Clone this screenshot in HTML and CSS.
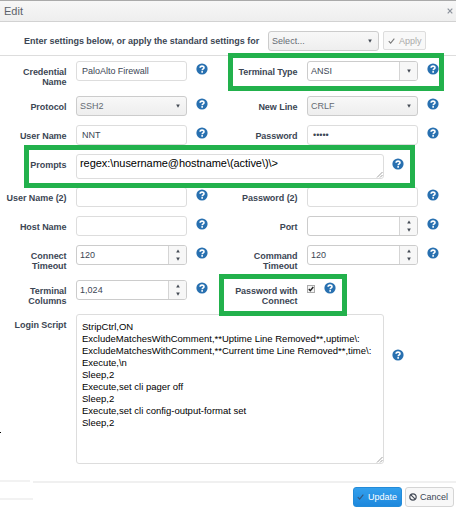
FILE: index.html
```html
<!DOCTYPE html>
<html lang="en">
<head>
<meta charset="utf-8">
<title>Edit</title>
<link rel="stylesheet" href="styles.css">
</head>
<body>
<svg width="0" height="0" class="defs">
  <symbol id="help" viewBox="0 0 12 12"><circle cx="6" cy="6" r="5.6" fill="#2870b0"/><path d="M4.1 4.8C4.1 2.6 8 2.6 8 4.7C8 6 6.2 5.9 6.2 7.3" fill="none" stroke="#fff" stroke-width="1.6"/><rect x="5.3" y="8.1" width="1.7" height="1.6" fill="#fff"/></symbol>
  <symbol id="grip" viewBox="0 0 7 7"><path d="M1 6.5L6.5 1M4 6.5L6.5 4" stroke="#888" stroke-width=".8"/></symbol>
  <symbol id="down" viewBox="0 0 5 5"><path d="M.2 .5H4.8L2.5 4.7Z" fill="#454b55"/></symbol>
  <symbol id="up" viewBox="0 0 5 5"><path d="M.2 4.5H4.8L2.5 .5Z" fill="#454b55"/></symbol>
</svg>
<div class="dialog">
  <header class="titlebar"><span class="title">Edit</span><svg class="close" viewBox="0 0 6 6"><path d="M.7 .7L5.3 5.3M5.3 .7L.7 5.3" stroke="#8b919b" stroke-width="1.2"/></svg></header>
  <div class="toolbar">
    <span class="intro">Enter settings below, or apply the standard settings for</span>
    <div class="field select preset"><span>Select...</span><svg class="arrow"><use href="#down"/></svg></div>
    <div class="apply"><svg class="tick" viewBox="0 0 8 7"><path d="M.8 3.7L3 6L7.3 .8" fill="none" stroke="#777" stroke-width="1.2"/></svg><span>Apply</span></div>
  </div>
  <main class="form">
    <label>Credential<br>Name</label><div class="field input"><span>PaloAlto Firewall</span></div><svg class="help"><use href="#help"/></svg>
    <label>Terminal Type</label><div class="field combo"><span>ANSI</span><i class="btn"><svg class="arrow"><use href="#down"/></svg></i></div><svg class="help"><use href="#help"/></svg>

    <label>Protocol</label><div class="field select"><span>SSH2</span><svg class="arrow"><use href="#down"/></svg></div><svg class="help"><use href="#help"/></svg>
    <label>New Line</label><div class="field select"><span>CRLF</span><svg class="arrow"><use href="#down"/></svg></div><svg class="help"><use href="#help"/></svg>

    <label>User Name</label><div class="field input"><span>NNT</span></div><svg class="help"><use href="#help"/></svg>
    <label>Password</label><div class="field input"><span class="dots">•••••</span></div><svg class="help"><use href="#help"/></svg>

    <label>Prompts</label>
    <div class="wide"><div class="field area prompts"><span>regex:\nusername@hostname\(active\)\&gt;</span><svg class="grip"><use href="#grip"/></svg></div><svg class="help"><use href="#help"/></svg></div>

    <label>User Name (2)</label><div class="field input"></div><svg class="help"><use href="#help"/></svg>
    <label>Password (2)</label><div class="field input"></div><svg class="help"><use href="#help"/></svg>

    <label>Host Name</label><div class="field input"></div><svg class="help"><use href="#help"/></svg>
    <label>Port</label><div class="field combo"><span></span><i class="btn"><svg class="arrow"><use href="#up"/></svg><svg class="arrow"><use href="#down"/></svg></i></div><svg class="help"><use href="#help"/></svg>

    <label>Connect<br>Timeout</label><div class="field combo"><span>120</span><i class="btn"><svg class="arrow"><use href="#up"/></svg><svg class="arrow"><use href="#down"/></svg></i></div><svg class="help"><use href="#help"/></svg>
    <label>Command<br>Timeout</label><div class="field combo"><span>120</span><i class="btn"><svg class="arrow"><use href="#up"/></svg><svg class="arrow"><use href="#down"/></svg></i></div><svg class="help"><use href="#help"/></svg>

    <label>Terminal<br>Columns</label><div class="field combo"><span>1,024</span><i class="btn"><svg class="arrow"><use href="#up"/></svg><svg class="arrow"><use href="#down"/></svg></i></div><svg class="help"><use href="#help"/></svg>
    <label>Password with<br>Connect</label>
    <div class="check"><svg class="box" viewBox="0 0 8 8"><rect x=".5" y=".5" width="7" height="7" fill="#f4f4f4" stroke="#aaa"/><path d="M1.8 4L3.3 5.7L6.3 2" fill="none" stroke="#222" stroke-width="1.4"/></svg><svg class="help"><use href="#help"/></svg></div>

    <label>Login Script</label>
    <div class="wide login"><div class="field area script"><pre>StripCtrl,ON
ExcludeMatchesWithComment,**Uptime Line Removed**,uptime\:
ExcludeMatchesWithComment,**Current time Line Removed**,time\:
Execute,\n
Sleep,2
Execute,set cli pager off
Sleep,2
Execute,set cli config-output-format set
Sleep,2</pre><svg class="grip"><use href="#grip"/></svg></div><svg class="help"><use href="#help"/></svg></div>
  </main>
  <footer class="footer">
    <div class="action primary"><svg class="tick" viewBox="0 0 8 7"><path d="M.8 3.7L3 6L7.3 .8" fill="none" stroke="#35577c" stroke-width="1.3"/></svg><span>Update</span></div>
    <div class="action"><svg class="ban" viewBox="0 0 8 8"><circle cx="4" cy="4" r="3.2" fill="none" stroke="#444b57" stroke-width="1.2"/><path d="M1.8 1.8L6.2 6.2" stroke="#444b57" stroke-width="1.2"/></svg><span>Cancel</span></div>
  </footer>
  <div class="mark mark-type"></div>
  <div class="mark mark-prompts"></div>
  <div class="mark mark-password"></div>
  <i class="line line-a"></i><i class="line line-b"></i><i class="speck"></i>
</div>
</body>
</html>
```
FILE: styles.css
```css
* { box-sizing: border-box; }
body { margin: 0; background: #fff; font: 9px "Liberation Sans", Arial, sans-serif; color: #3c4654; }
.defs { position: absolute; }
svg { display: block; flex: none; }
.dialog { position: relative; width: 456px; height: 508px; display: flex; flex-direction: column; overflow: hidden; }
.titlebar { height: 22px; flex: none; display: flex; align-items: center; justify-content: space-between; padding: 0 3px 0 4px; background: linear-gradient(#f7f7f7, #eee); border-top: 1px solid #aaa; border-bottom: 1px solid #d2d2d2; }
.title { font-size: 11px; color: #5c626b; }
.close { width: 6px; height: 6px; }
.toolbar { height: 34px; flex: none; display: flex; align-items: flex-start; padding: 9px 0 0 24px; border-bottom: 1px solid #ddd; }
.intro { width: 244px; padding-top: 5px; line-height: 10px; font-weight: bold; letter-spacing: -.01px; white-space: nowrap; }
.apply { display: flex; align-items: center; gap: 4px; width: 43px; height: 19px; margin-left: 4px; padding-left: 4px; border: 1px solid #ddd; border-radius: 2px; background: #f8f8f8; color: #aaa; }
.tick { width: 7px; height: 6px; }
.form { height: 425px; flex: none; display: grid; grid-template-columns: 76px 120px 12px 99px 120px 12px; grid-template-rows: 35px 29px 29px 33px 29px 29px 35px 34px 149px; padding-top: 5px; align-items: start; }
label { padding: 6px 9.5px 0 0; line-height: 10px; font-weight: bold; text-align: right; letter-spacing: -.05px; white-space: nowrap; }
.field { height: 20px; width: 111px; display: flex; align-items: center; border: 1px solid #ddd; border-radius: 3px; background: #fff; letter-spacing: .03px; }
.input { padding-left: 5px; letter-spacing: -.02px; }
.select { justify-content: space-between; padding: 0 6px 0 3px; background: linear-gradient(#f8f8f8, #eee); border-color: #ccc; color: #646a72; }
.select span { padding-bottom: 1px; }
.combo { justify-content: space-between; padding-left: 3px; border-color: #ccc; overflow: hidden; }
.btn { width: 18px; height: 18px; display: flex; flex-direction: column; align-items: center; justify-content: center; gap: 4px; background: #f7f7f7; border-left: 1px solid #d5d5d5; }
.arrow { width: 4px; height: 4px; }
.help { width: 12px; height: 12px; margin-top: 1.5px; }
.dots { letter-spacing: 0; }
.wide { grid-column: 2 / -1; display: flex; gap: 8px; }
.area { position: relative; width: 308px; align-items: flex-start; color: #000; }
.prompts { height: 25px; padding: 1px 3px; font-size: 11px; line-height: 14px; letter-spacing: -.05px; }
.wide .help { margin-top: 4px; }
.script { height: 150px; padding: 6px 5px; letter-spacing: 0; }
.login .help { margin-top: 35px; }
pre { margin: 0; font: 9.5px/12px "Liberation Sans", Arial, sans-serif; }
.grip { position: absolute; right: 0; bottom: 0; width: 7px; height: 7px; }
.check { display: flex; grid-column: 5 / -1; gap: 8.5px; }
.box { width: 8px; height: 8px; margin-top: 5px; }
.check .help { margin-top: 2px; }
.footer { height: 27px; flex: none; display: flex; justify-content: flex-end; gap: 3px; padding: 4px 2px 0 0; margin-left: 33px; border-top: 2px solid #f0f0f0; }
.action { width: 49px; height: 20px; display: flex; align-items: center; gap: 3px; padding-left: 3px; border: 1px solid #d5d5d5; border-radius: 3px; background: #f8f8f8; white-space: nowrap; }
.primary { background: linear-gradient(#33a0ed, #1d88dd); border-color: #238bd8; color: #fff; gap: 4px; }
.ban { width: 8px; height: 8px; }
.mark { position: absolute; border: 5px solid #22b14c; }
.mark-type { left: 228px; top: 53px; width: 216px; height: 38px; }
.mark-prompts { left: 24px; top: 145px; width: 391px; height: 43px; }
.mark-password { left: 219px; top: 274px; width: 128px; height: 42px; }
.line { position: absolute; left: 0; height: 2px; background: #f2f2f2; }
.line-a { top: 480px; width: 30px; }
.line-b { top: 498px; width: 33px; }
.speck { position: absolute; left: 0; top: 432px; width: 1px; height: 1px; background: #000; }
```
